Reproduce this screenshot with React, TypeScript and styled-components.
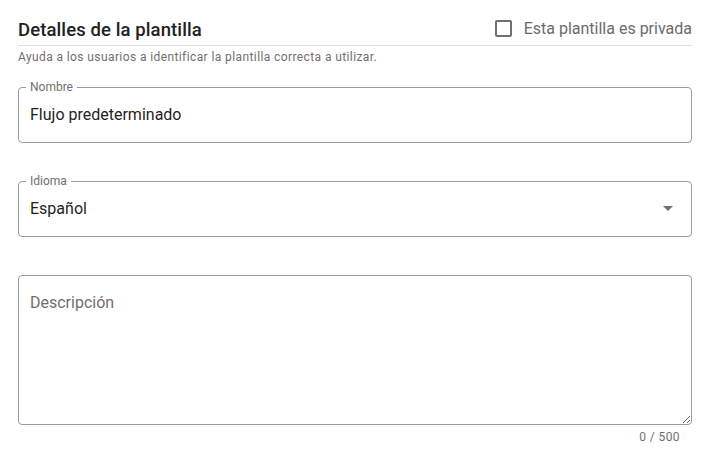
import React from "react";
import styled, {createGlobalStyle} from "styled-components";

const GlobalStyle = createGlobalStyle`
  body {
    margin: 0;
    background: #ffffff;
    font-family: Roboto, "Liberation Sans", sans-serif;
  }
`;

const Page = styled.div`
  width: 709px;
  box-sizing: border-box;
  padding: 15px 17px 0 18px;
`;

const Header = styled.div`
  display: flex;
  justify-content: space-between;
  align-items: center;
  height: 30px;
  border-bottom: 1px solid #e0e0e0;
`;

const Title = styled.h2`
  margin: 0;
  font-size: 18.5px;
  font-weight: 500;
  color: #212121;
  letter-spacing: 0.1px;
`;

const CheckLabel = styled.label`
  display: flex;
  align-items: center;
  gap: 12px;
  font-size: 16px;
  color: #6b6b6b;
  margin-top: -3px;
`;

const Box = styled.span`
  width: 13px;
  height: 13px;
  border: 2px solid #707070;
  border-radius: 2px;
`;

const Helper = styled.p`
  margin: 4px 0 0;
  font-size: 12px;
  letter-spacing: 0.4px;
  color: #6f6f6f;
`;

const Field = styled.div<{ $top: number }>`
  position: relative;
  margin-top: ${p => p.$top}px;
  height: 56px;
  box-sizing: border-box;
  border: 1px solid #9c9c9c;
  border-radius: 4px;
  display: flex;
  align-items: center;
  justify-content: space-between;
  padding: 0 11px 2px;
  font-size: 16px;
  color: #1f1f1f;
`;

const Label = styled.span`
  position: absolute;
  top: -8px;
  left: 7px;
  padding: 0 4px;
  background: #ffffff;
  font-size: 12px;
  color: #6f6f6f;
`;

const Arrow = styled.svg`
  width: 24px;
  height: 24px;
  fill: #6f6f6f;
`;

const TextArea = styled.textarea`
  display: block;
  width: 100%;
  height: 150px;
  margin-top: 38px;
  box-sizing: border-box;
  border: 1px solid #9c9c9c;
  border-radius: 4px;
  padding: 17px 11px;
  font-family: Roboto, "Liberation Sans", sans-serif;
  font-size: 16px;
  resize: vertical;
  outline: none;

  &::placeholder {
    color: #6f6f6f;
  }
`;

const Counter = styled.div`
  text-align: right;
  padding-right: 12px;
  margin-top: 5px;
  font-size: 12px;
  letter-spacing: 0.4px;
  color: #6f6f6f;
`;

export default function App() {
    return (
        <>
            <GlobalStyle />
            <Page>
                <Header>
                    <Title>Detalles de la plantilla</Title>
                    <CheckLabel>
                        <Box />
                        Esta plantilla es privada
                    </CheckLabel>
                </Header>
                <Helper>Ayuda a los usuarios a identificar la plantilla correcta a utilizar.</Helper>

                <Field $top={23}>
                    <Label>Nombre</Label>
                    Flujo predeterminado
                </Field>

                <Field $top={38}>
                    <Label>Idioma</Label>
                    Español
                    <Arrow viewBox="0 0 24 24">
                        <path d="M7 10l5 5 5-5z" />
                    </Arrow>
                </Field>

                <TextArea placeholder="Descripción" />
                <Counter>0 / 500</Counter>
            </Page>
        </>
    );
}
